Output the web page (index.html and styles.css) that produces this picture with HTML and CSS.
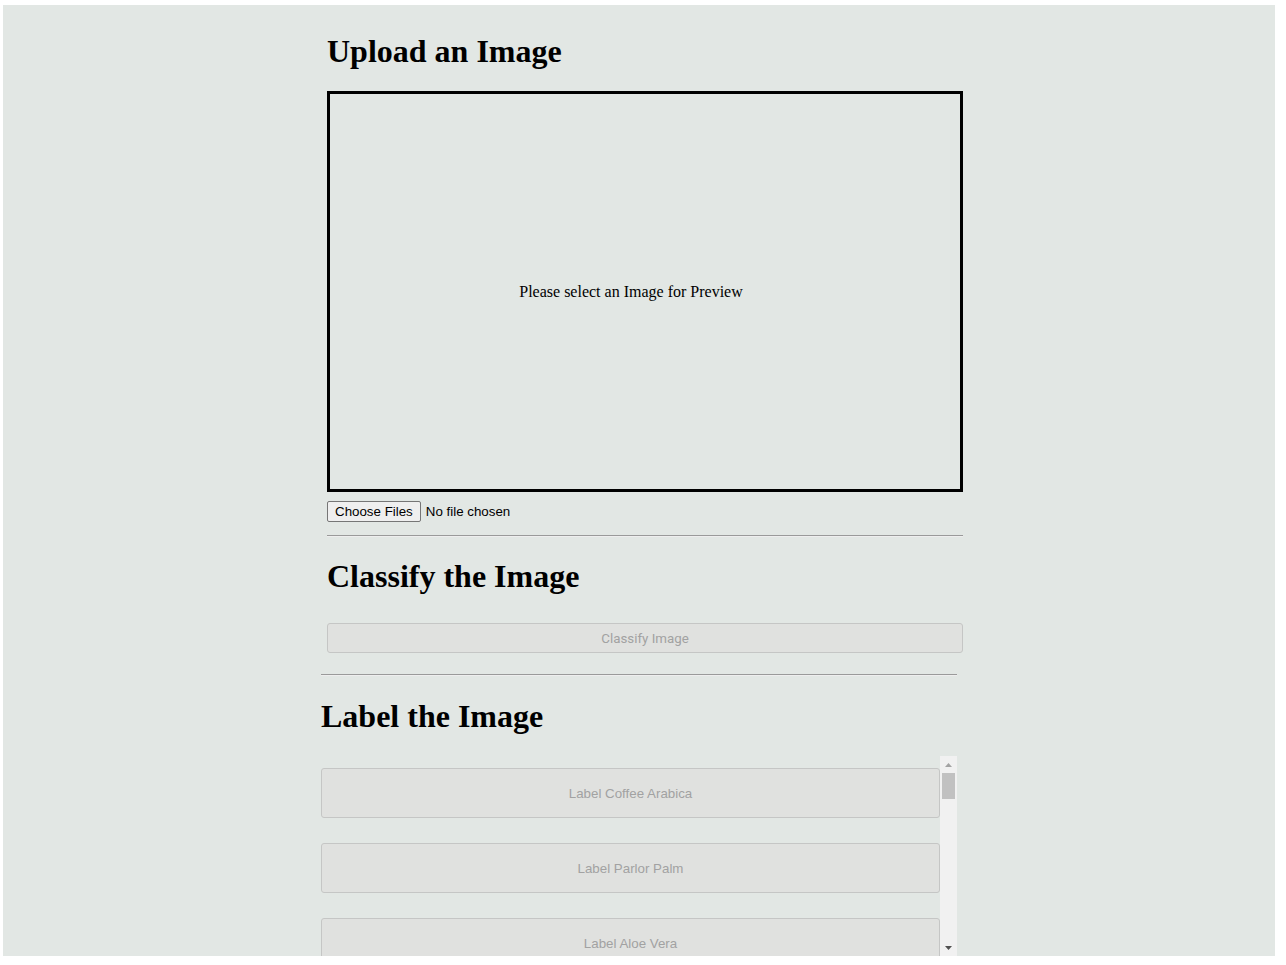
FILE: index.html
```html
<!DOCTYPE html>
<html lang="en">
<head>
<meta charset="utf-8">
<title>Image Classifier</title>
<link rel="stylesheet" href="styles.css">
</head>
<body>
<div class="page">
  <main class="column">
    <div class="shifted">
      <section class="upload">
        <h1 class="title">Upload an Image</h1>
        <div class="preview">Please select an Image for Preview</div>
        <div class="file-row">
          <label class="file-btn">Choose Files<input class="file-input" type="file" multiple></label>
          <span class="file-status">No file chosen</span>
        </div>
      </section>
      <hr class="rule rule-first">
      <section class="classify">
        <h1 class="title title-classify">Classify the Image</h1>
        <button class="action-btn classify-btn" disabled>Classify Image</button>
      </section>
    </div>
    <hr class="rule rule-second">
    <section class="label">
      <h1 class="title title-label">Label the Image</h1>
      <div class="list-box">
        <div class="list-items">
          <button class="action-btn label-btn" disabled>Label Coffee Arabica</button>
          <button class="action-btn label-btn" disabled>Label Parlor Palm</button>
          <button class="action-btn label-btn" disabled>Label Aloe Vera</button>
          <button class="action-btn label-btn" disabled>Label Snake Plant</button>
        </div>
        <div class="scrollbar">
          <div class="sb-btn">
            <svg width="7" height="4" viewBox="0 0 7 4"><polygon points="0,4 3.5,0 7,4" fill="#a3a3a3"/></svg>
          </div>
          <div class="sb-track"><div class="sb-thumb"></div></div>
          <div class="sb-btn sb-btn-down">
            <svg width="7" height="4" viewBox="0 0 7 4"><polygon points="0,0 7,0 3.5,4" fill="#505050"/></svg>
          </div>
        </div>
      </div>
    </section>
  </main>
</div>
</body>
</html>
```

FILE: styles.css
```css
html, body {
  margin: 0;
  padding: 0;
  background: #ffffff;
}

.page {
  margin: 5px 11px 0 3px;
  height: 951px;
  overflow: hidden;
  background: #e2e7e4;
  font-family: "Liberation Serif", "Times New Roman", serif;
  color: #000;
}

.column {
  width: 636px;
  margin: 0 auto;
  padding-top: 28px;
  display: flex;
  flex-direction: column;
}

.shifted {
  margin-left: 6px;
  width: 636px;
  display: flex;
  flex-direction: column;
}

.upload, .classify, .label {
  display: flex;
  flex-direction: column;
}

.title {
  margin: 0;
  font-family: "Liberation Serif", "Times New Roman", serif;
  font-weight: 700;
  font-size: 32px;
  line-height: 36px;
}

.preview {
  margin-top: 22px;
  height: 395px;
  padding-right: 28px;
  border: 3px solid #000;
  display: flex;
  align-items: center;
  justify-content: center;
  font-size: 16px;
}

.file-row {
  margin-top: 9px;
  height: 21px;
  display: flex;
  align-items: center;
  font-family: "Liberation Sans", Arial, sans-serif;
  font-size: 13.333px;
}

.file-btn {
  box-sizing: border-box;
  height: 21px;
  padding: 0 7px 1px;
  display: flex;
  align-items: center;
  background: #efefef;
  border: 1px solid #767676;
  border-radius: 2px;
  color: #000;
}

.file-input {
  display: none;
}

.file-status {
  margin-left: 5px;
  margin-bottom: 1px;
}

.rule {
  margin: 0;
  height: 0;
  border: 0;
  border-top: 1px solid #9a9a9a;
  border-bottom: 1px solid #eeeeee;
}

.rule-first {
  margin-top: 13px;
}

.title-classify {
  margin-top: 21px;
}

.action-btn {
  box-sizing: border-box;
  width: 100%;
  margin: 0;
  padding: 0;
  background: #e0e1df;
  border: 1px solid #c5c6c5;
  border-radius: 3px;
  color: #a2a2a2;
}

.classify-btn {
  margin-top: 29px;
  height: 30px;
  font-family: Roboto, "Liberation Sans", Arial, sans-serif;
  font-size: 13.333px;
}

.rule-second {
  margin-top: 21px;
}

.title-label {
  margin-top: 22px;
}

.list-box {
  margin-top: 22px;
  height: 200px;
  display: flex;
}

.list-items {
  flex: 1;
  overflow: hidden;
  padding-top: 12px;
  display: flex;
  flex-direction: column;
  gap: 25px;
}

.label-btn {
  flex: none;
  height: 50px;
  font-family: "Liberation Sans", Arial, sans-serif;
  font-size: 13.333px;
}

.scrollbar {
  width: 17px;
  flex: none;
  background: #f1f1f1;
  display: flex;
  flex-direction: column;
}

.sb-btn {
  height: 17px;
  flex: none;
  display: flex;
  align-items: center;
  justify-content: center;
}

.sb-btn svg {
  display: block;
  margin-top: 1px;
}

.sb-btn-down svg {
  margin-top: 0;
}

.sb-track {
  flex: 1;
}

.sb-thumb {
  height: 26px;
  margin: 0 2px;
  background: #c1c1c1;
}
```
